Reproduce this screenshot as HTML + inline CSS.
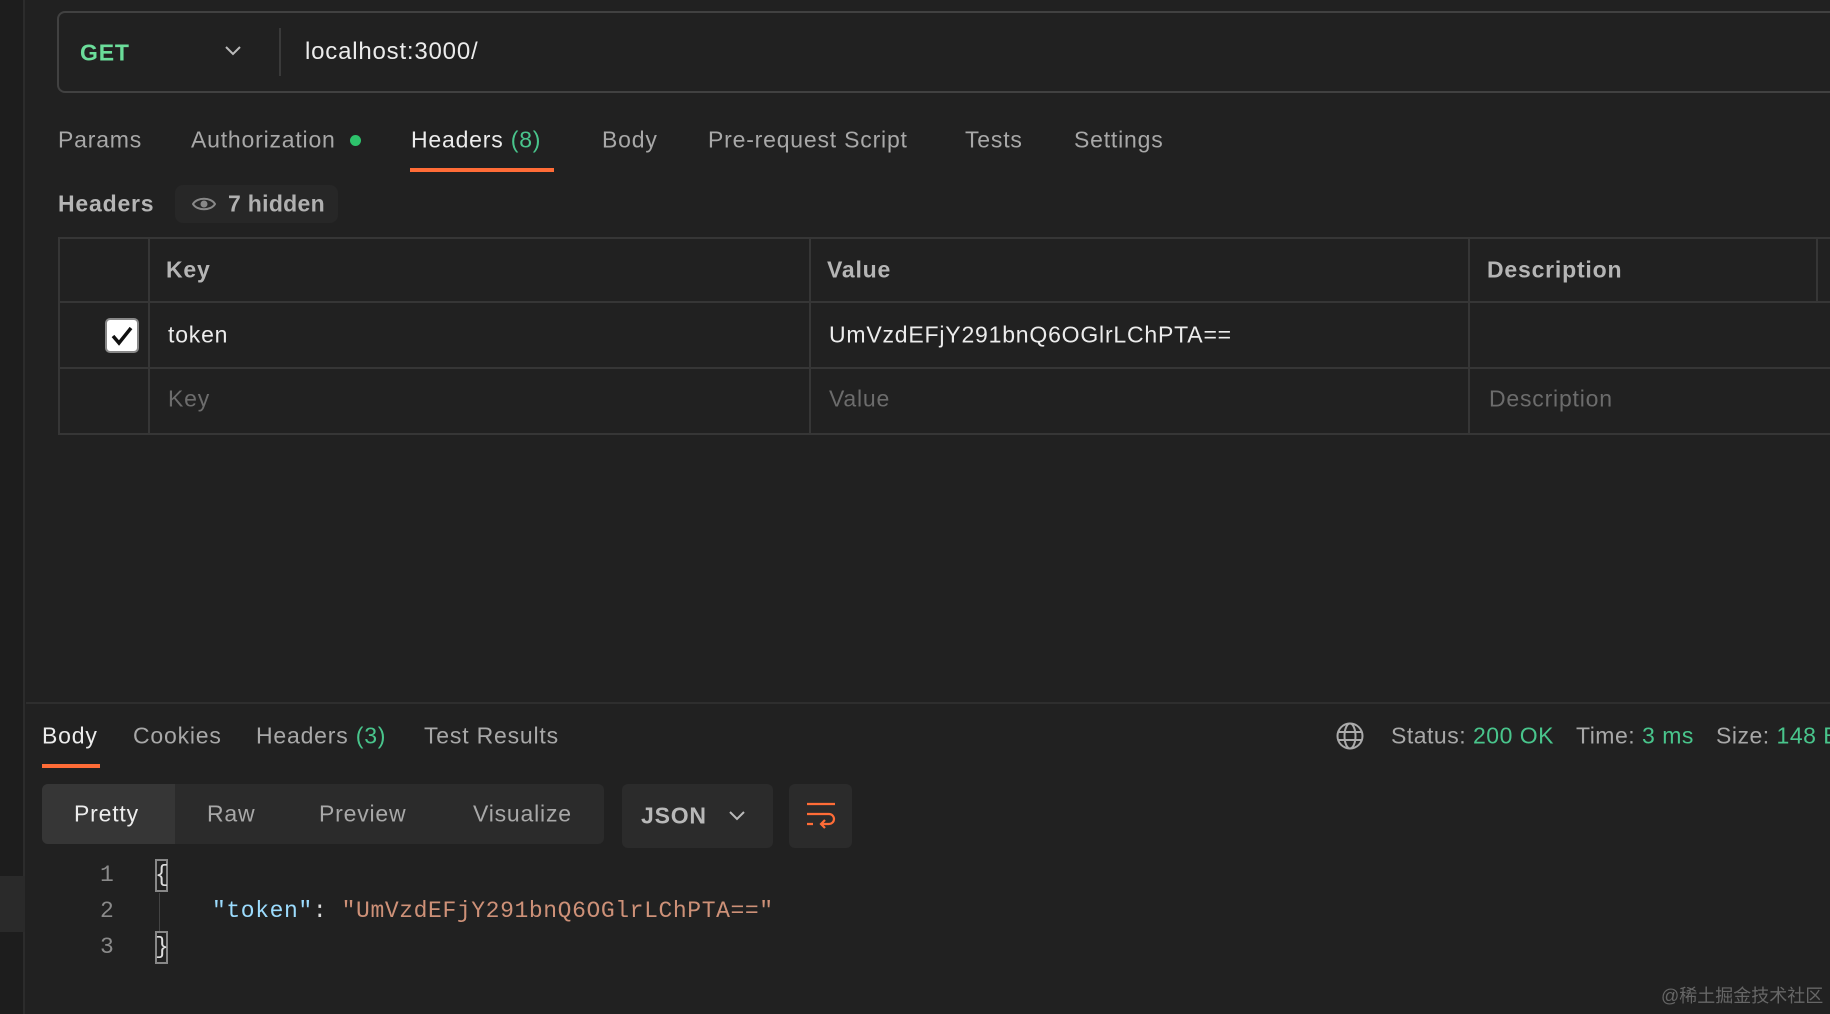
<!DOCTYPE html>
<html><head><meta charset="utf-8"><style>
*{margin:0;padding:0;box-sizing:border-box}
body{width:1830px;height:1014px;background:#212121;overflow:hidden;position:relative;font-family:"Liberation Sans","Noto Sans CJK SC",sans-serif;color:#a8a8a8;font-size:23px;letter-spacing:0.8px}
.a{position:absolute;white-space:nowrap}
.c{transform:translateY(-50%)}
.g{color:#49c58c}
.w{color:#ececec}
.tl{position:absolute;background:#363636}
</style></head><body>
<div class="a" style="left:0;top:0;width:25px;height:1014px;background:#1d1d1d;border-right:2px solid #2c2c2c"></div>
<div class="a" style="left:0;top:876px;width:25px;height:56px;background:#2a2a2a"></div>

<div class="a" style="left:57px;top:11px;width:1800px;height:82px;border:2px solid #414141;border-radius:8px"></div>
<div class="a c" style="left:80px;top:53px;color:#6bdd9a;font-weight:bold;font-size:23px">GET</div>
<svg class="a" style="left:224px;top:45px" width="18" height="12" viewBox="0 0 18 12"><path d="M2 2l7 7 7-7" fill="none" stroke="#bbb" stroke-width="2"/></svg>
<div class="a" style="left:279px;top:28px;width:2px;height:48px;background:#3a3a3a"></div>
<div class="a c w" style="left:305px;top:52px;font-size:24px">localhost:3000/</div>

<div class="a c" style="left:58px;top:140px">Params</div>
<div class="a c" style="left:191px;top:140px">Authorization</div>
<div class="a" style="left:350px;top:135px;width:11px;height:11px;border-radius:50%;background:#2dc26b"></div>
<div class="a c w" style="left:411px;top:140px">Headers <span class="g">(8)</span></div>
<div class="a" style="left:410px;top:168px;width:144px;height:4px;background:#ff6c37"></div>
<div class="a c" style="left:602px;top:140px">Body</div>
<div class="a c" style="left:708px;top:140px">Pre-request Script</div>
<div class="a c" style="left:965px;top:140px">Tests</div>
<div class="a c" style="left:1074px;top:140px">Settings</div>

<div class="a c" style="left:58px;top:204px;font-weight:bold;color:#b5b5b5">Headers</div>
<div class="a" style="left:175px;top:185px;width:163px;height:38px;background:#272727;border-radius:8px"></div>
<svg class="a" style="left:192px;top:196px" width="24" height="16" viewBox="0 0 24 16"><path d="M1 8C5 1 19 1 23 8C19 15 5 15 1 8Z" fill="none" stroke="#888" stroke-width="2"/><circle cx="12" cy="8" r="3.5" fill="#888"/></svg>
<div class="a c" style="left:228px;top:204px;font-weight:bold;color:#b0b0b0;letter-spacing:0.3px">7 hidden</div>

<div class="a" style="left:58px;top:237px;width:1790px;height:198px;border:2px solid #363636"></div>
<div class="tl" style="left:58px;top:301px;width:1790px;height:2px"></div>
<div class="tl" style="left:58px;top:367px;width:1790px;height:2px"></div>
<div class="tl" style="left:148px;top:237px;width:2px;height:198px"></div>
<div class="tl" style="left:809px;top:237px;width:2px;height:198px"></div>
<div class="tl" style="left:1468px;top:237px;width:2px;height:198px"></div>
<div class="tl" style="left:1816px;top:237px;width:2px;height:65px"></div>
<div class="a c" style="left:166px;top:270px;font-weight:bold;color:#b5b5b5">Key</div>
<div class="a c" style="left:827px;top:270px;font-weight:bold;color:#b5b5b5">Value</div>
<div class="a c" style="left:1487px;top:270px;font-weight:bold;color:#b5b5b5">Description</div>
<div class="a" style="left:105px;top:318px;width:34px;height:35px;background:#fff;border-radius:5px;border:2px solid #888"></div>
<svg class="a" style="left:108px;top:322px" width="28" height="28" viewBox="0 0 28 28"><path d="M5 14l6 7 12-15" fill="none" stroke="#111" stroke-width="3.5"/></svg>
<div class="a c w" style="left:168px;top:335px">token</div>
<div class="a c w" style="left:829px;top:335px">UmVzdEFjY291bnQ6OGlrLChPTA==</div>
<div class="a c" style="left:168px;top:399px;color:#6c6c6c">Key</div>
<div class="a c" style="left:829px;top:399px;color:#6c6c6c">Value</div>
<div class="a c" style="left:1489px;top:399px;color:#6c6c6c">Description</div>

<div class="a" style="left:26px;top:702px;width:1804px;height:2px;background:#2e2e2e"></div>
<div class="a c w" style="left:42px;top:736px">Body</div>
<div class="a" style="left:42px;top:764px;width:58px;height:4px;background:#ff6c37"></div>
<div class="a c" style="left:133px;top:736px">Cookies</div>
<div class="a c" style="left:256px;top:736px">Headers <span class="g">(3)</span></div>
<div class="a c" style="left:424px;top:736px">Test Results</div>
<svg class="a" style="left:1336px;top:722px" width="28" height="28" viewBox="0 0 28 28" fill="none" stroke="#aaa" stroke-width="2"><circle cx="14" cy="14" r="12.5"/><ellipse cx="14" cy="14" rx="5.5" ry="12.5"/><path d="M2 10h24M2 18h24"/></svg>
<div class="a c" style="left:1391px;top:736px;letter-spacing:0.5px">Status: <span class="g">200 OK</span></div>
<div class="a c" style="left:1576px;top:736px;letter-spacing:0.5px">Time: <span class="g">3 ms</span></div>
<div class="a c" style="left:1716px;top:736px;letter-spacing:0.5px">Size: <span class="g">148 B</span></div>

<div class="a" style="left:42px;top:784px;width:562px;height:60px;background:#2b2b2b;border-radius:6px"></div>
<div class="a" style="left:42px;top:784px;width:133px;height:60px;background:#363636;border-radius:6px 0 0 6px"></div>
<div class="a c w" style="left:74px;top:814px">Pretty</div>
<div class="a c" style="left:207px;top:814px">Raw</div>
<div class="a c" style="left:319px;top:814px">Preview</div>
<div class="a c" style="left:473px;top:814px">Visualize</div>
<div class="a" style="left:622px;top:784px;width:151px;height:64px;background:#2b2b2b;border-radius:6px"></div>
<div class="a c" style="left:641px;top:816px;font-weight:bold;color:#b8b8b8">JSON</div>
<svg class="a" style="left:728px;top:810px" width="18" height="12" viewBox="0 0 18 12"><path d="M2 2l7 7 7-7" fill="none" stroke="#bbb" stroke-width="2"/></svg>
<div class="a" style="left:789px;top:784px;width:63px;height:64px;background:#2b2b2b;border-radius:6px"></div>
<svg class="a" style="left:805px;top:801px" width="32" height="30" viewBox="0 0 32 30" fill="none" stroke="#ff6c37" stroke-width="2.2"><path d="M2 3h28M2 13h22a5 5 0 0 1 0 10h-7M20 19l-4 4 4 4M2 23h6"/></svg>

<div style="font-family:'Liberation Mono',monospace;font-size:23px;letter-spacing:0.6px">
<div class="a c" style="left:100px;top:875px;color:#8a8a8a">1</div>
<div class="a c" style="left:100px;top:911px;color:#8a8a8a">2</div>
<div class="a c" style="left:100px;top:947px;color:#8a8a8a">3</div>
<div class="a" style="left:155px;top:859px;width:13px;height:33px;border:2px solid #888"></div>
<div class="a c" style="left:155px;top:875px;color:#ddd">{</div>
<div class="a" style="left:155px;top:931px;width:13px;height:33px;border:2px solid #888"></div>
<div class="a c" style="left:155px;top:947px;color:#ddd">}</div>
<div class="a" style="left:159px;top:893px;width:1px;height:38px;background:#444"></div>
<div class="a c" style="left:212px;top:911px"><span style="color:#9cdcfe">"token"</span><span style="color:#ddd">: </span><span style="color:#ce9178">"UmVzdEFjY291bnQ6OGlrLChPTA=="</span></div>
</div>

<div class="a c" style="left:1661px;top:995px;font-size:18px;color:#666;letter-spacing:0">@稀土掘金技术社区</div>
</body></html>
